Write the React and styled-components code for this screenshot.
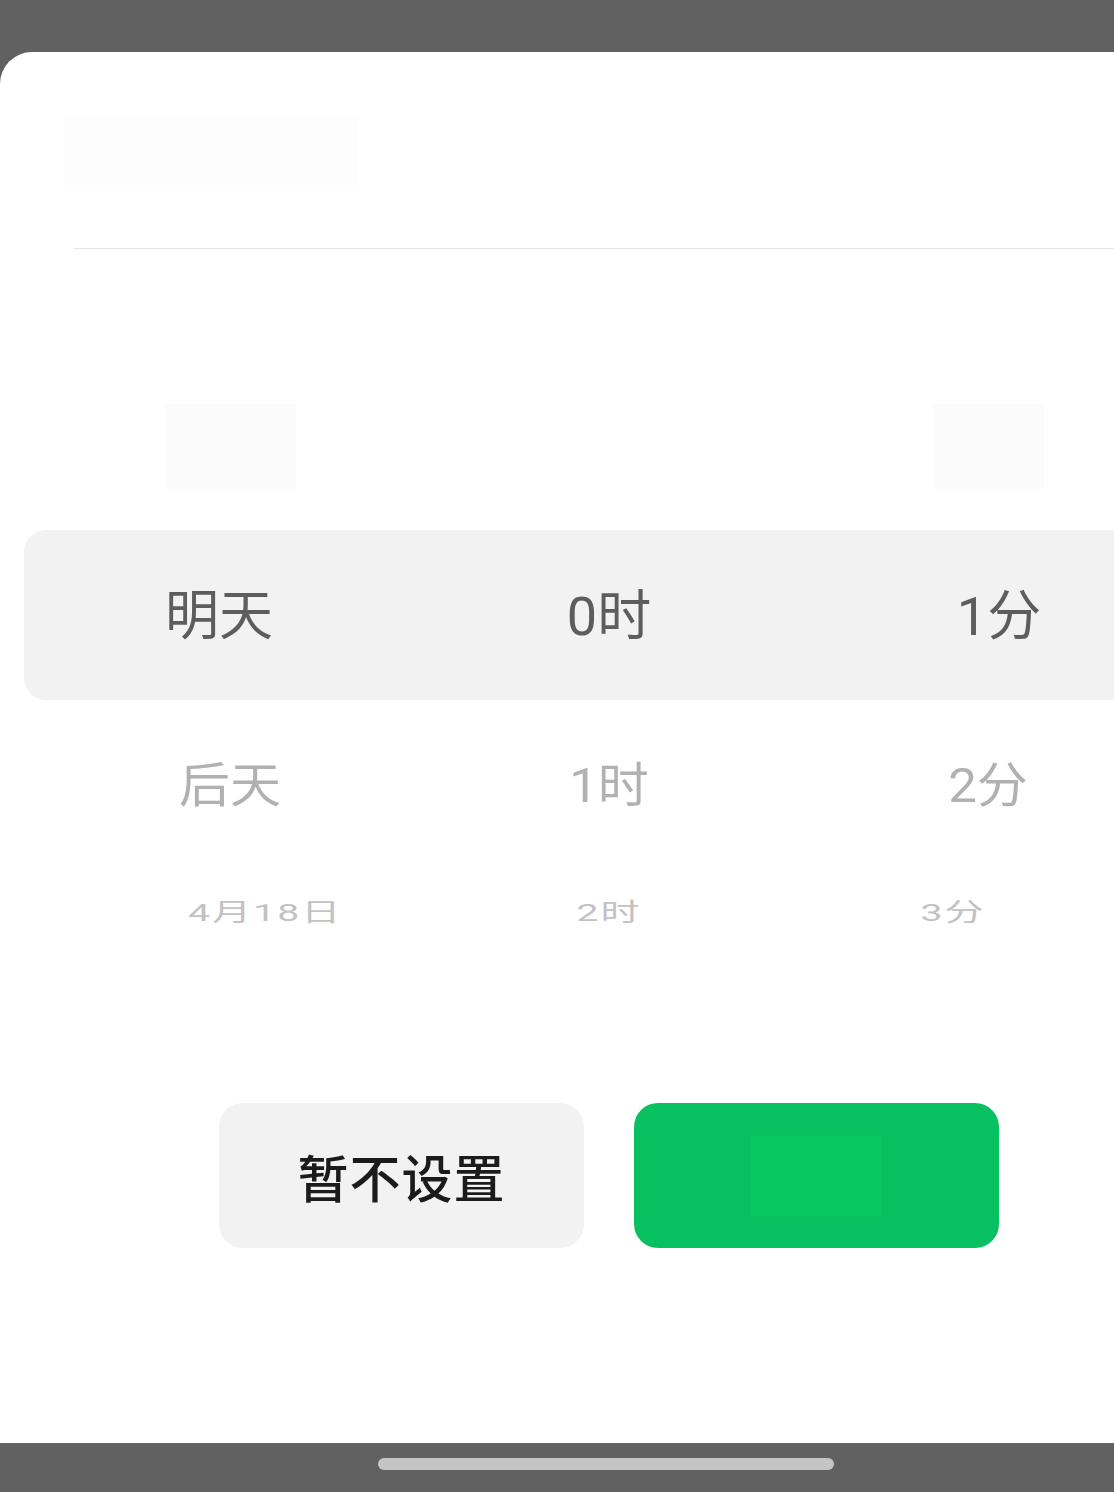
import styled, { createGlobalStyle } from 'styled-components';

const GlobalStyle = createGlobalStyle`
    html, body {
        margin: 0;
        padding: 0;
        background: #616161;
        overflow: hidden;
    }

    body {
        font-family: Roboto, "Noto Sans CJK SC", sans-serif;
    }
`;

// the sheet is wider than the phone frame: its right side is cut off
const Frame = styled.div`
    width: 100vw;
    height: 1492px;
    overflow: hidden;
`;

const Screen = styled.div`
    width: 1218px;
    height: 1492px;
    display: flex;
    flex-direction: column;
`;

const StatusArea = styled.div`
    height: 52px;
    flex-shrink: 0;
`;

const Sheet = styled.div`
    flex: 1;
    background: #ffffff;
    border-radius: 32px 32px 0 0;
    display: flex;
    flex-direction: column;
`;

const Header = styled.header`
    padding: 65px 0 0 64px;
`;

const TitleBlur = styled.div`
    width: 294px;
    height: 69px;
    background: #fdfdfd;
`;

const Divider = styled.div`
    height: 1px;
    margin: 62px 0 0 73px;
    background: #e6e6e6;
`;

const Picker = styled.div`
    margin-top: 113px;
    padding: 0 0 0 24px;
    display: flex;
    flex-direction: column;
`;

const Row = styled.div`
    height: ${({ $height }) => $height}px;
    display: grid;
    grid-template-columns: repeat(3, 390px);
    align-items: center;
    background: ${({ $selected }) => $selected ? '#f2f2f2' : 'transparent'};
    border-radius: ${({ $selected }) => $selected ? '22px' : '0'};
`;

const Cell = styled.div`
    display: flex;
    justify-content: center;
    align-items: center;
    transform: translateX(${({ $shift }) => $shift}px);
`;

const Label = styled.span`
    white-space: nowrap;
    line-height: 1;
    color: ${({ $level }) => ['#5d5d5d', '#b1b1b1', '#c2c2c2'][$level]};
    font-size: ${({ $level }) => [54, 51, 29][$level]}px;
    letter-spacing: ${({ $level }) => $level === 2 ? '1.5px' : '0'};
    transform: ${({ $level }) => [
        'translateY(2px)',
        'scaleY(0.93)',
        'scale(1.35, 0.85)',
    ][$level]};
`;

const Ghost = styled.div`
    width: ${({ $width }) => $width}px;
    height: 85px;
    background: #fbfbfb;
`;

const Actions = styled.div`
    margin-top: 149px;
    display: flex;
    justify-content: center;
    gap: 50px;
`;

const Button = styled.button`
    width: 365px;
    height: 145px;
    border: none;
    border-radius: 24px;
    padding: 0;
    display: flex;
    justify-content: center;
    align-items: center;
    background: ${({ $primary }) => $primary ? '#07c160' : '#f2f2f2'};
    color: #1b1b1b;
    font-family: "Noto Sans CJK SC", sans-serif;
    font-size: 51px;
    font-weight: 500;
    letter-spacing: 1px;
`;

const ButtonBlur = styled.div`
    width: 131px;
    height: 80px;
    background: #08c95f;
`;

const HomeBar = styled.div`
    height: 49px;
    flex-shrink: 0;
    display: flex;
    justify-content: center;
    padding: 15px 6px 0 0;
    box-sizing: border-box;
`;

const HomePill = styled.div`
    width: 456px;
    height: 12px;
    border-radius: 6px;
    background: #c4c4c4;
`;

const rows = [
    { height: 168, shift: 11, level: 1, items: null },
    { height: 170, shift: 0, level: 0, items: ['明天', '0时', '1分'], selected: true },
    { height: 170, shift: 11, level: 1, items: ['后天', '1时', '2分'] },
    { height: 84, shift: 46, level: 2, items: ['4月18日', '2时', '3分'] },
];

const App = () => {
    return (
        <>
            <GlobalStyle />
            <Frame>
                <Screen>
                    <StatusArea />
                    <Sheet>
                        <Header>
                            <TitleBlur />
                        </Header>
                        <Divider />

                        <Picker>
                            {rows.map((row, i) => (
                                <Row key={i} $height={row.height} $selected={row.selected}>
                                    {row.items ? (
                                        row.items.map((text, col) => (
                                            <Cell key={col} $shift={row.shift * (1 - col)}>
                                                <Label $level={row.level}>{text}</Label>
                                            </Cell>
                                        ))
                                    ) : (
                                        <>
                                            <Cell $shift={row.shift}><Ghost $width={131} /></Cell>
                                            <Cell $shift={0} />
                                            <Cell $shift={-row.shift}><Ghost $width={111} /></Cell>
                                        </>
                                    )}
                                </Row>
                            ))}
                        </Picker>

                        <Actions>
                            <Button>暂不设置</Button>
                            <Button $primary><ButtonBlur /></Button>
                        </Actions>
                    </Sheet>
                    <HomeBar>
                        <HomePill />
                    </HomeBar>
                </Screen>
            </Frame>
        </>
    );
}

export default App;
